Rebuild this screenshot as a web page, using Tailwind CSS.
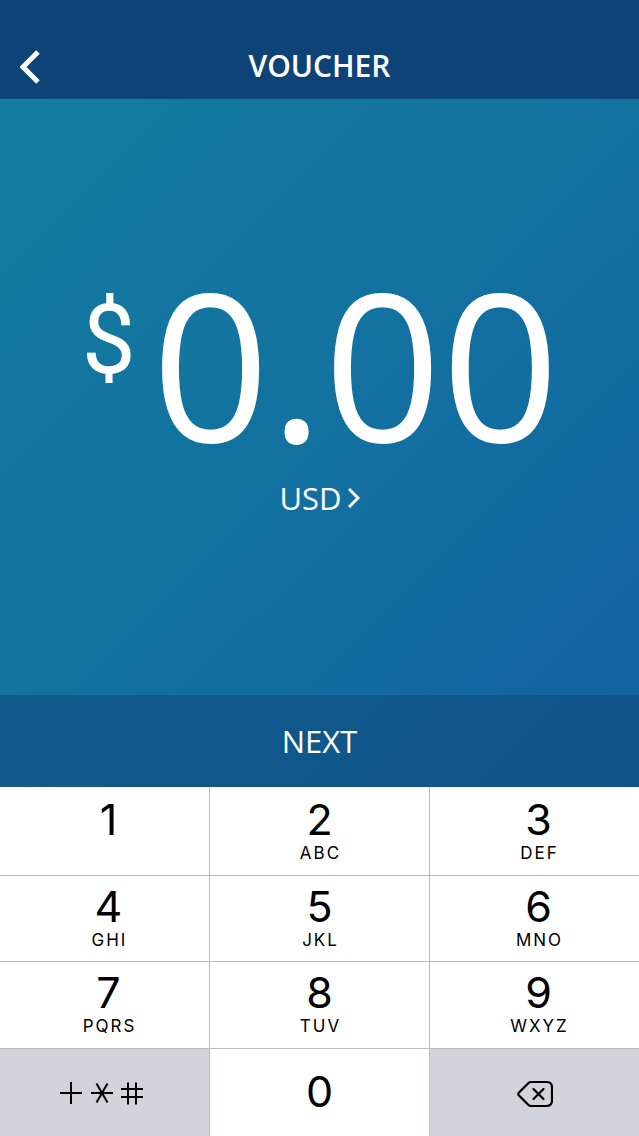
<!DOCTYPE html>
<html lang="en">
<head>
    <meta charset="UTF-8">
    <meta name="viewport" content="width=device-width, initial-scale=1">
    <title>Voucher</title>
    <script src="https://cdn.jsdelivr.net/npm/@tailwindcss/browser@4"></script>
</head>
<body class="flex min-h-screen flex-col bg-linear-135 from-[#157e9e] via-[#1270a0] via-45% to-[#12599d] font-['Open_Sans',sans-serif] text-white">
    <header class="grid grid-cols-[64px_1fr_64px] items-center border-b border-[#0b4f7c] bg-[#0e4377] pt-9">
        <button type="button" aria-label="Back" class="flex h-[62px] items-center pl-5">
            <svg class="h-[34px] w-5" viewBox="0 0 20 34" fill="none" stroke="currentColor" stroke-width="5">
                <path d="M18 2 3 17l15 15" />
            </svg>
        </button>
        <h1 class="pb-0.5 text-center text-[30px] leading-10 font-semibold">VOUCHER</h1>
    </header>

    <main class="flex flex-1 flex-col items-center justify-center pb-1">
        <div class="flex items-start pl-0.5">
            <span class="mr-4 pt-4 font-[Roboto,sans-serif] text-[96px] leading-[104px]">$</span>
            <span class="text-[206px] leading-[180px]">0.00</span>
        </div>
        <button type="button" class="mt-6 flex items-center gap-1.5 pt-0.5 text-[31px] leading-10 font-normal">
            USD
            <svg class="h-5 w-3" viewBox="0 0 12 20" fill="none" stroke="currentColor" stroke-width="3">
                <path d="m1 1 9 9-9 9" />
            </svg>
        </button>
    </main>

    <button type="button" class="h-[92px] bg-[#0e4377]/50 text-[31px] font-normal">NEXT</button>

    <!-- Numeric keypad -->
    <div class="grid grid-cols-[209fr_219fr_209fr] grid-rows-[88px_85px_86px_87px] gap-px bg-[#b9b9be] font-[Inter,sans-serif] text-black">
        <button type="button" class="flex flex-col items-center bg-white pt-2.5 pl-2">
            <span class="text-[43px] leading-[44px]">1</span>
        </button>
        <button type="button" class="flex flex-col items-center bg-white pt-2.5">
            <span class="text-[43px] leading-[44px]">2</span>
            <span class="pl-0.5 text-[17px] leading-6 tracking-[2px]">ABC</span>
        </button>
        <button type="button" class="flex flex-col items-center bg-white pt-2.5 pl-2">
            <span class="text-[43px] leading-[44px]">3</span>
            <span class="pl-0.5 text-[17px] leading-6 tracking-[2px]">DEF</span>
        </button>
        <button type="button" class="flex flex-col items-center bg-white pt-2 pl-2">
            <span class="text-[43px] leading-[44px]">4</span>
            <span class="pl-0.5 text-[17px] leading-6 tracking-[2px]">GHI</span>
        </button>
        <button type="button" class="flex flex-col items-center bg-white pt-2">
            <span class="text-[43px] leading-[44px]">5</span>
            <span class="pl-0.5 text-[17px] leading-6 tracking-[2px]">JKL</span>
        </button>
        <button type="button" class="flex flex-col items-center bg-white pt-2 pl-2">
            <span class="text-[43px] leading-[44px]">6</span>
            <span class="pl-0.5 text-[17px] leading-6 tracking-[2px]">MNO</span>
        </button>
        <button type="button" class="flex flex-col items-center bg-white pt-2 pl-2">
            <span class="text-[43px] leading-[44px]">7</span>
            <span class="pl-0.5 text-[17px] leading-6 tracking-[2px]">PQRS</span>
        </button>
        <button type="button" class="flex flex-col items-center bg-white pt-2">
            <span class="text-[43px] leading-[44px]">8</span>
            <span class="pl-0.5 text-[17px] leading-6 tracking-[2px]">TUV</span>
        </button>
        <button type="button" class="flex flex-col items-center bg-white pt-2 pl-2">
            <span class="text-[43px] leading-[44px]">9</span>
            <span class="pl-0.5 text-[17px] leading-6 tracking-[2px]">WXYZ</span>
        </button>
        <button type="button" aria-label="Symbols" class="flex items-center justify-center bg-[#d1d4db] pr-1.5">
            <svg class="h-6 w-[84px]" viewBox="0 0 84 24" fill="none" stroke="currentColor" stroke-width="2">
                <path d="M0 12h22M11 1v22" />
                <path d="M31 12h22M36.500 2.500l11 19M47.500 2.500l-11 19" />
                <path d="M61 8h22M61 16h22M68 1.500v22M76 1.500v22" />
            </svg>
        </button>
        <button type="button" class="flex items-center justify-center bg-white pb-1">
            <span class="text-[43px] leading-[44px]">0</span>
        </button>
        <button type="button" aria-label="Delete" class="flex items-center justify-center bg-[#d1d4db] pt-0.5">
            <svg class="h-7 w-9" viewBox="0 0 36 28" fill="none" stroke="currentColor" stroke-width="2.200" stroke-linecap="round" stroke-linejoin="round">
                <path d="M14 2h15.500Q35 2 35 7.500v13Q35 26 29.500 26H14q-1.500 0-2.500-1L2 15.500q-1.500-1.500 0-3L11.500 3Q12.500 2 14 2z" />
                <path d="m16.500 9 10 10M26.500 9l-10 10" />
            </svg>
        </button>
    </div>
</body>
</html>
